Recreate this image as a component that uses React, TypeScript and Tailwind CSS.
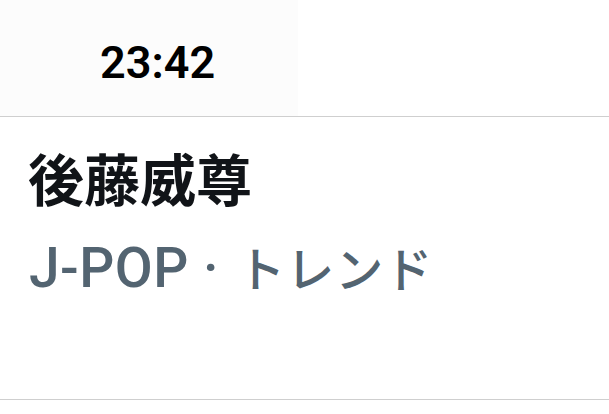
export default function App() {
  return (
    <div className="w-[609px] h-[414px] bg-white overflow-hidden flex flex-col">
      {/* ステータスバー */}
      <div className="h-[116px] flex">
        <div className="w-[298px] h-full bg-[#fcfcfc] pl-[100px] pt-[40px]">
          <span
            className="text-[45px] leading-none font-semibold text-black"
            style={{ fontFamily: 'Roboto, "Liberation Sans", sans-serif' }}
          >
            23:42
          </span>
        </div>
        <div className="flex-1 h-full bg-white" />
      </div>
      <div className="h-px bg-[#cfcfcf]" />

      {/* トレンド項目 */}
      <div className="h-[282px] pl-[28px] pt-[32px]">
        <div
          className="text-[56px] leading-none font-bold text-[#111418]"
          style={{ fontFamily: '"Noto Sans CJK JP", sans-serif' }}
        >
          後藤威尊
        </div>
        <div
          className="mt-[36px] text-[55px] leading-none font-medium text-[#536471] pl-[1px] whitespace-nowrap tracking-[0.5px]"
          style={{ fontFamily: 'Roboto, "Noto Sans CJK JP", sans-serif' }}
        >
          J-POP ·{" "}
          <span
            className="ml-[4px] text-[48px] tracking-[1px]"
            style={{ fontFamily: '"Noto Sans CJK JP", sans-serif' }}
          >
            トレンド
          </span>
        </div>
      </div>
      <div className="h-px bg-[#cfcfcf]" />
      <div className="flex-1 bg-white" />
    </div>
  );
}
